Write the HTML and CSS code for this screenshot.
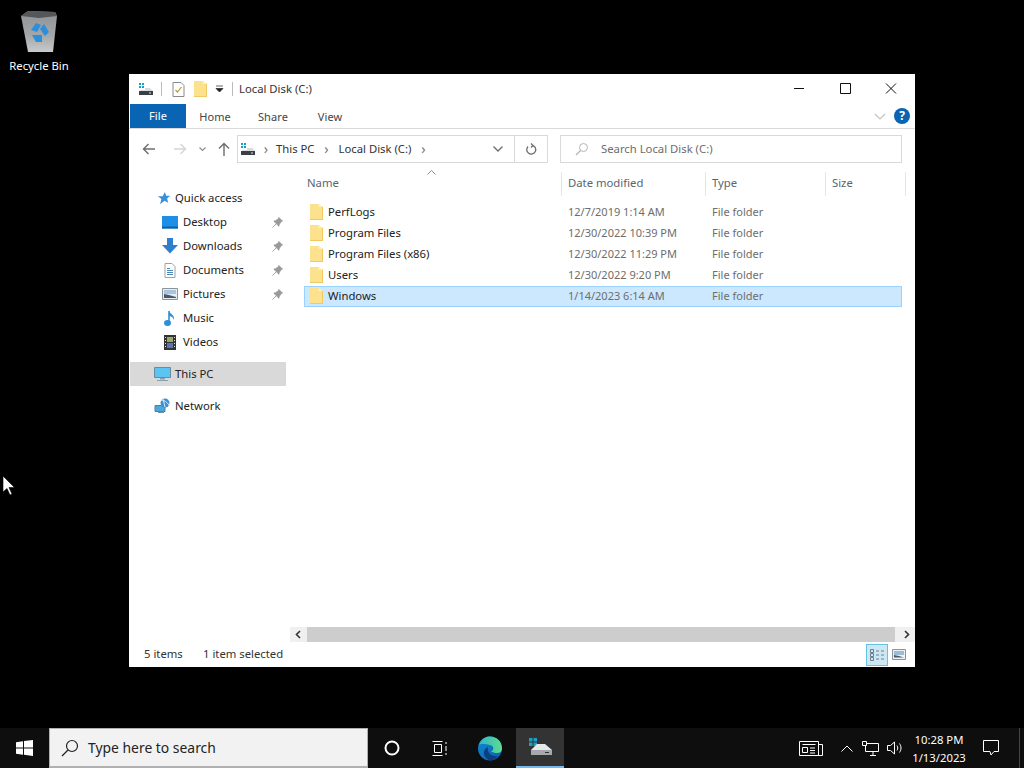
FILE: index.html
```html
<!DOCTYPE html>
<html lang="en">
<head>
    <meta charset="UTF-8">
    <title>Local Disk (C:)</title>
    <link rel="stylesheet" href="styles.css">
</head>
<body>
    <svg class="sprites" width="0" height="0">
        <defs>
            <linearGradient id="edgeFill" x1="0" y1="0" x2="1" y2="1">
                <stop offset="0" stop-color="#0f8ad0"/>
                <stop offset="1" stop-color="#0c5fae"/>
            </linearGradient>
            <linearGradient id="edgeTop" x1="0" y1="0" x2="1" y2="0">
                <stop offset="0" stop-color="#2fb6c8"/>
                <stop offset="1" stop-color="#5fdc8c"/>
            </linearGradient>
            <linearGradient id="binFill" x1="0" y1="0" x2="0" y2="1">
                <stop offset="0" stop-color="#8f9295"/>
                <stop offset=".6" stop-color="#a5a7a9"/>
                <stop offset="1" stop-color="#c8cacb"/>
            </linearGradient>
        </defs>
        <symbol id="folder" viewBox="0 0 13 16">
            <path d="M0 0h8.500L13 3v13H0z" fill="#fde28e"/>
            <path d="M12 2.500l1 .5v13H0v-1h12z" fill="#eec964"/>
            <path d="M8.500 0L13 3H8.500z" fill="#fff0b8"/>
        </symbol>
        <symbol id="drive" viewBox="0 0 16 14">
            <path d="M1 1h2v2H1zM4 1h2v2H4zM1 4h2v2H1zM4 4h2v2H4z" fill="#1aa0c8"/>
            <path d="M7 6h5l3 3H2l1-1h4z" fill="#d8dde2"/>
            <path d="M1 9h14v4H1z" fill="#3a3f45"/>
            <path d="M11 10.500h2v1h-2z" fill="#d7e7f2"/>
        </symbol>
        <symbol id="pin" viewBox="0 0 12 12">
            <path d="M7.500.5l4 4-1.500.5L8 8l-.5 2L2 4.500 4 4l3-2zM4.500 7.500L.5 11.500" fill="#999" stroke="#999"/>
        </symbol>
    </svg>

    <div class="desktop">
        <div class="recycle-bin">
            <svg width="38" height="44" viewBox="0 0 38 44">
                <path d="M1 7l7-5 27 1 2 4-4 36H8z" fill="url(#binFill)"/>
                <path d="M1 7l7-5 27 1 2 4-18 2z" fill="#55585b"/>
                <path d="M11 21l5-7 5 2-4 7zM24 15l5 8-4 4-5-7zM12 26h10v7h-6z" fill="#2c8fdc"/>
            </svg>
            <span>Recycle Bin</span>
        </div>

        <div class="window">
            <div class="titlebar">
                <svg class="qat-drive" width="16" height="14"><use href="#drive"/></svg>
                <span class="qat-sep"></span>
                <svg width="13" height="15" viewBox="0 0 13 15">
                    <path d="M1 .5h8l3 3v11H1z" fill="#fff" stroke="#8a8a8a"/>
                    <path d="M3.500 8l2 2 4-5" fill="none" stroke="#b59a3a" stroke-width="1.200"/>
                </svg>
                <svg class="qat-folder" width="13" height="16"><use href="#folder"/></svg>
                <svg class="qat-arrow" width="9" height="8" viewBox="0 0 9 8">
                    <path d="M1 1h7M1 3.500h7L4.500 7z" fill="#222" stroke="#222" stroke-width=".7"/>
                </svg>
                <span class="qat-sep"></span>
                <span class="title-text">Local Disk (C:)</span>
                <div class="win-buttons">
                    <svg width="46" height="30" viewBox="0 0 46 30"><path d="M18 14.500h10" stroke="#111"/></svg>
                    <svg width="46" height="30" viewBox="0 0 46 30"><path d="M18.500 9.500h10v10h-10z" fill="none" stroke="#111"/></svg>
                    <svg width="46" height="30" viewBox="0 0 46 30"><path d="M18 9.500l10 10M28 9.500l-10 10" stroke="#111"/></svg>
                </div>
            </div>

            <div class="tabs">
                <div class="tab tab-file">File</div>
                <div class="tab">Home</div>
                <div class="tab">Share</div>
                <div class="tab">View</div>
                <div class="ribbon-right">
                    <svg width="12" height="7" viewBox="0 0 12 7"><path d="M1 1l5 5 5-5" fill="none" stroke="#c4c4c4" stroke-width="1.200"/></svg>
                    <span class="help">?</span>
                </div>
            </div>

            <div class="toolbar">
                <div class="nav-arrows">
                    <svg width="14" height="12" viewBox="0 0 14 12"><path d="M13 6H2M6.500 1L1.500 6l5 5" fill="none" stroke="#6d6d6d" stroke-width="1.400"/></svg>
                    <svg width="14" height="12" viewBox="0 0 14 12"><path d="M1 6h11M7.500 1l5 5-5 5" fill="none" stroke="#d5d5d5" stroke-width="1.400"/></svg>
                    <svg width="7" height="5" viewBox="0 0 7 5"><path d="M.5.500l3 3 3-3" fill="none" stroke="#8a8a8a" stroke-width="1.100"/></svg>
                    <svg width="12" height="14" viewBox="0 0 12 14"><path d="M6 14V2M1 6.500l5-5 5 5" fill="none" stroke="#6d6d6d" stroke-width="1.400"/></svg>
                </div>
                <div class="address">
                    <svg class="addr-drive" width="16" height="14"><use href="#drive"/></svg>
                    <span class="crumb-sep">›</span>
                    <span class="crumb">This PC</span>
                    <span class="crumb-sep">›</span>
                    <span class="crumb">Local Disk (C:)</span>
                    <span class="crumb-sep">›</span>
                    <svg class="addr-down" width="10" height="6" viewBox="0 0 10 6"><path d="M.5.500L5 5 9.500.500" fill="none" stroke="#6d6d6d" stroke-width="1.300"/></svg>
                </div>
                <div class="refresh">
                    <svg width="12" height="13" viewBox="0 0 12 13"><path d="M7.500 2.300A4.500 4.500 0 1 1 3 3.500M6 .5l2 2-2 2" fill="none" stroke="#6d6d6d" stroke-width="1.300"/></svg>
                </div>
                <div class="search">
                    <svg width="14" height="14" viewBox="0 0 14 14"><circle cx="8.500" cy="5.500" r="4" fill="none" stroke="#b5b5b5"/><path d="M5.500 8.500L1 13" stroke="#b5b5b5" stroke-width="1.200"/></svg>
                    <span>Search Local Disk (C:)</span>
                </div>
            </div>

            <div class="body">
                <nav class="sidebar">
                    <div class="nav-row nav-top">
                        <svg width="14" height="14" viewBox="0 0 16 16"><path d="M9 1l1.500 4.500H15l-3.500 3 1.300 5L8.500 11 3.500 15l1.500-6L1 6h5.500z" fill="#3a8fd6"/></svg>
                        <span>Quick access</span>
                    </div>
                    <div class="nav-row nav-child">
                        <svg width="16" height="13" viewBox="0 0 16 13"><path d="M0 0h16v12.500H0z" fill="#1e8fe6"/><path d="M0 10.500h16v2H0z" fill="#0f5fa8"/></svg>
                        <span>Desktop</span>
                        <svg class="pin" width="11" height="11"><use href="#pin"/></svg>
                    </div>
                    <div class="nav-row nav-child">
                        <svg width="16" height="16" viewBox="0 0 16 16"><path d="M5 0h6v7h5l-8 8.500L0 7h5z" fill="#2f7fd0"/></svg>
                        <span>Downloads</span>
                        <svg class="pin" width="11" height="11"><use href="#pin"/></svg>
                    </div>
                    <div class="nav-row nav-child">
                        <svg width="16" height="15" viewBox="0 0 16 15"><path d="M3 .5h7l3 3v11H3z" fill="#fff" stroke="#9aa3ad"/><path d="M5 5.500h3M5 7.500h6M5 9.500h6M5 11.500h6" stroke="#4a87b8"/></svg>
                        <span>Documents</span>
                        <svg class="pin" width="11" height="11"><use href="#pin"/></svg>
                    </div>
                    <div class="nav-row nav-child">
                        <svg width="16" height="12" viewBox="0 0 16 12"><path d="M.5.500h15v11H.5z" fill="#e6eef5" stroke="#8b939b"/><path d="M2 2h12v4H2z" fill="#a8c4de"/><path d="M2 9V6l5 1 7 2v1H2z" fill="#4a5a6a"/></svg>
                        <span>Pictures</span>
                        <svg class="pin" width="11" height="11"><use href="#pin"/></svg>
                    </div>
                    <div class="nav-row nav-child">
                        <svg width="16" height="17" viewBox="0 0 16 17"><path d="M7 1v11" stroke="#2e8fd8" stroke-width="1.600"/><path d="M7 1c1 3 6 4 5 9-1-3-3-4-5-4z" fill="#2e8fd8"/><ellipse cx="5.500" cy="13" rx="3.500" ry="3" fill="#2e8fd8"/></svg>
                        <span>Music</span>
                    </div>
                    <div class="nav-row nav-child">
                        <svg width="16" height="15" viewBox="0 0 16 15"><path d="M2 0h12v15H2z" fill="#333"/><path d="M5 2h6v5H5z" fill="#9aa86a"/><path d="M5 8h6v5H5z" fill="#5a74b0"/><path d="M3 2h1v1H3zM3 5h1v1H3zM3 8h1v1H3zM3 11h1v1H3zM12 2h1v1h-1zM12 5h1v1h-1zM12 8h1v1h-1zM12 11h1v1h-1z" fill="#ddd"/></svg>
                        <span>Videos</span>
                    </div>
                    <div class="nav-row nav-this-pc">
                        <svg width="17" height="16" viewBox="0 0 17 16"><path d="M.5 1.500h16v10H.5z" fill="#5cc4f2" stroke="#6a8aa0"/><path d="M6 12h5v1.500H6z" fill="#8aa0b0"/><path d="M3 14.500h11" stroke="#8aa0b0"/></svg>
                        <span>This PC</span>
                    </div>
                    <div class="nav-row nav-network">
                        <svg width="17" height="16" viewBox="0 0 17 16"><path d="M1 7.500h10v6H1z" fill="#4aa8e0" stroke="#5a7f9c"/><path d="M4 14.500h6" stroke="#7a8f9f"/><circle cx="11" cy="5" r="4.500" fill="#3d8fd0"/><path d="M7 2c3 0 6 2 8 5M9 1l2 8" stroke="#d9ecf7" fill="none"/></svg>
                        <span>Network</span>
                    </div>
                </nav>

                <main class="content">
                    <div class="sort-arrow">
                        <svg width="9" height="5" viewBox="0 0 9 5"><path d="M.5 4.500l4-4 4 4" fill="none" stroke="#8a8a8a"/></svg>
                    </div>
                    <div class="list-header">
                        <div class="col col-name">Name</div>
                        <div class="col col-date">Date modified</div>
                        <div class="col col-type">Type</div>
                        <div class="col col-size">Size</div>
                    </div>
                    <div class="rows">
                        <div class="row">
                            <div class="cell-name"><svg width="13" height="16"><use href="#folder"/></svg>PerfLogs</div>
                            <div class="cell-meta">12/7/2019 1:14 AM</div>
                            <div class="cell-meta">File folder</div>
                        </div>
                        <div class="row">
                            <div class="cell-name"><svg width="13" height="16"><use href="#folder"/></svg>Program Files</div>
                            <div class="cell-meta">12/30/2022 10:39 PM</div>
                            <div class="cell-meta">File folder</div>
                        </div>
                        <div class="row">
                            <div class="cell-name"><svg width="13" height="16"><use href="#folder"/></svg>Program Files (x86)</div>
                            <div class="cell-meta">12/30/2022 11:29 PM</div>
                            <div class="cell-meta">File folder</div>
                        </div>
                        <div class="row">
                            <div class="cell-name"><svg width="13" height="16"><use href="#folder"/></svg>Users</div>
                            <div class="cell-meta">12/30/2022 9:20 PM</div>
                            <div class="cell-meta">File folder</div>
                        </div>
                        <div class="row row-selected">
                            <div class="cell-name"><svg width="13" height="16"><use href="#folder"/></svg>Windows</div>
                            <div class="cell-meta">1/14/2023 6:14 AM</div>
                            <div class="cell-meta">File folder</div>
                        </div>
                    </div>
                    <div class="hscroll">
                        <svg width="17" height="15" viewBox="0 0 17 15"><path d="M10 4L6.500 7.500 10 11" fill="none" stroke="#333" stroke-width="1.600"/></svg>
                        <div class="hscroll-thumb"></div>
                        <svg width="17" height="15" viewBox="0 0 17 15"><path d="M7 4l3.500 3.500L7 11" fill="none" stroke="#333" stroke-width="1.600"/></svg>
                    </div>
                </main>
            </div>

            <div class="statusbar">
                <span class="status-count">5 items</span>
                <span>1 item selected</span>
                <div class="view-buttons">
                    <div class="view-btn view-btn-on">
                        <svg width="16" height="14" viewBox="0 0 16 14"><path d="M1.500 1.500h3v3h-3zM1.500 5.500h3v3h-3zM1.500 9.500h3v3h-3z" fill="none" stroke="#6d7f8f"/><path d="M7 3h3M12 3h3M7 7h3M12 7h3M7 11h3M12 11h3" stroke="#6d7f8f"/></svg>
                    </div>
                    <div class="view-btn">
                        <svg width="14" height="11" viewBox="0 0 14 11"><path d="M.5.500h13v10H.5z" fill="#eef2f5" stroke="#8b939b"/><path d="M2 2h10v4H2z" fill="#9dbbd6"/><path d="M2 8.500V6l5 1 5 1.500z" fill="#4a5a6a"/></svg>
                    </div>
                </div>
            </div>
        </div>

        <svg class="cursor" width="12" height="20" viewBox="0 0 12 20">
            <path d="M0 0v16l4-3.500L7 19l2-1-3-6.500h5.500z" fill="#fff" stroke="#000" stroke-width=".6"/>
        </svg>
    </div>

    <footer class="taskbar">
        <div class="start">
            <svg width="17" height="16" viewBox="0 0 17 16"><path d="M0 2.300l7-1v6.200H0zM8 1.100L17 0v7.500H8zM0 8.500h7v6.200l-7-1zM8 8.500h9V16l-9-1.200z" fill="#fff"/></svg>
        </div>
        <div class="task-search">
            <svg width="18" height="18" viewBox="0 0 18 18"><circle cx="11" cy="7" r="5.500" fill="none" stroke="#222" stroke-width="1.200"/><path d="M7 11l-6 6" stroke="#222" stroke-width="1.300"/></svg>
            <span>Type here to search</span>
        </div>
        <div class="task-btn">
            <svg width="16" height="16" viewBox="0 0 16 16"><circle cx="8" cy="8" r="6.500" fill="none" stroke="#fff" stroke-width="2"/></svg>
        </div>
        <div class="task-btn">
            <svg width="16" height="15" viewBox="0 0 16 15"><path d="M.5.500h10M.5 14.500h10M2.500 3.500h7v8h-7zM14 1v2M14 5v5M14 12v2" fill="none" stroke="#fff"/></svg>
        </div>
        <div class="task-btn task-btn-edge">
            <svg width="24" height="25" viewBox="0 0 24 25">
                <circle cx="12" cy="12.500" r="12" fill="url(#edgeFill)"/>
                <path d="M1 9C3 2 9 .5 12 .5c7 0 12 5 12 12 0 3-2 4.500-5 4.500-2 0-5-.5-6-2 3 0 3.500-5-1-6C7 8 3 7.500 1 9z" fill="url(#edgeTop)"/>
                <path d="M10 12c-1 5 4 9 10 8-1 1-2 2-3 3-5 3-10 0-11-5-.5-3 1-6 4-7z" fill="#0b3f80"/>
            </svg>
        </div>
        <div class="task-btn task-btn-active">
            <svg width="23" height="20" viewBox="0 0 23 20">
                <path d="M0 1h3.500v3.500H0zM4.500 1H8v3.500H4.500zM0 5.500h3.500V9H0zM4.500 5.500H8V9H4.500z" fill="#1aa0c8"/>
                <path d="M8 7h8l7 6H2z" fill="#e6e9ec"/>
                <path d="M2 13h21v5H2z" fill="#a4a9ae"/>
                <path d="M16 15h4v1h-4z" fill="#333"/>
            </svg>
        </div>
        <div class="tray">
            <svg width="24" height="15" viewBox="0 0 24 15"><path d="M.5.500h19v14H.5zM19.500 3.500h4v11h-4zM3.500 3.500h13M3.500 6.500h5v5h-5zM11 7h5M11 9.500h5M11 12h5" fill="none" stroke="#fff"/></svg>
            <svg class="tray-chevron" width="12" height="7" viewBox="0 0 12 7"><path d="M.5 6.500L6 1l5.500 5.500" fill="none" stroke="#fff"/></svg>
            <svg class="tray-net" width="17" height="15" viewBox="0 0 17 15"><path d="M3.500 2.500h13v8H3.500zM8 14.500h6M11 10.500v4" fill="none" stroke="#fff"/><path d="M.5.500h4v4h-4z" fill="#111" stroke="#fff"/></svg>
            <svg class="tray-sound" width="16" height="14" viewBox="0 0 16 14"><path d="M.5 4.500h3l4-3.500v12l-4-3.500h-3zM10 4.500c1 1.500 1 3.500 0 5M12.500 2.500c2 3 2 6 0 9" fill="none" stroke="#fff"/></svg>
            <div class="clock">
                <div>10:28 PM</div>
                <div>1/13/2023</div>
            </div>
            <svg class="notify" width="16" height="16" viewBox="0 0 16 16"><path d="M.5.500h15v11h-4.500L8 15l-1-3.500H.5z" fill="none" stroke="#fff"/></svg>
            <span class="show-desktop"></span>
        </div>
    </footer>
</body>
</html>
```

FILE: styles.css
```css
* {
    margin: 0;
    padding: 0;
    box-sizing: border-box;
}

body {
    width: 1024px;
    height: 768px;
    overflow: hidden;
    background-color: #000;
    font-family: "Noto Sans", "Open Sans", sans-serif;
    font-size: 11.3px;
    color: #1f1f1f;
    display: flex;
    flex-direction: column;
}

svg {
    display: block;
    flex-shrink: 0;
}

.sprites {
    position: absolute;
}

.desktop {
    position: relative;
    flex: 1;
}

.recycle-bin {
    position: absolute;
    left: 0;
    top: 9px;
    width: 78px;
    display: flex;
    flex-direction: column;
    align-items: center;
    gap: 5px;
    color: #fff;
}

.recycle-bin span {
    line-height: 15px;
}

.cursor {
    position: absolute;
    left: 3px;
    top: 476px;
}

/* explorer window */
.window {
    position: absolute;
    left: 129px;
    top: 74px;
    width: 786px;
    height: 593px;
    background-color: #fff;
    display: flex;
    flex-direction: column;
}

.titlebar {
    height: 30px;
    display: flex;
    align-items: center;
    padding-left: 9px;
}

.qat-sep {
    width: 1px;
    height: 14px;
    background-color: #bbb;
    margin: 0 10px 0 7px;
}

.qat-folder {
    margin-left: 9px;
}

.qat-arrow {
    margin-left: 8px;
}

.qat-arrow + .qat-sep {
    margin-left: 8px;
    margin-right: 6px;
}

.title-text {
    color: #333;
    padding-bottom: 1px;
}

.win-buttons {
    margin-left: auto;
    display: flex;
    margin-right: 1px;
}

.tabs {
    height: 25px;
    display: flex;
    padding-left: 1px;
    border-bottom: 1px solid #dadada;
}

.tab {
    width: 58px;
    line-height: 25px;
    text-align: center;
    color: #444;
    font-size: 11px;
    letter-spacing: .1px;
}

.tab-file {
    width: 56px;
    line-height: 24px;
    background-color: #0a64b4;
    color: #fff;
}

.tab:nth-child(4) {
    margin-left: -1px;
}

.ribbon-right {
    margin-left: auto;
    display: flex;
    align-items: center;
    gap: 8px;
    padding-right: 5px;
}

.help {
    width: 16px;
    height: 16px;
    border-radius: 50%;
    background-color: #0a64b4;
    color: #fff;
    font-weight: 700;
    font-size: 12px;
    line-height: 16px;
    text-align: center;
}

.toolbar {
    height: 28px;
    margin-top: 6px;
    display: flex;
    align-items: center;
}

.nav-arrows {
    width: 108px;
    display: flex;
    align-items: center;
    padding-left: 13px;
}

.nav-arrows svg:nth-child(2) {
    margin-left: 17px;
}

.nav-arrows svg:nth-child(3) {
    margin-left: 12px;
}

.nav-arrows svg:nth-child(4) {
    margin-left: 12px;
}

.address {
    width: 278px;
    height: 28px;
    border: 1px solid #d9d9d9;
    display: flex;
    align-items: center;
    padding-left: 2px;
    color: #333;
}

.crumb {
    padding-bottom: 2px;
}

.crumb-sep {
    width: 24px;
    text-align: center;
    color: #777;
    font-size: 14px;
    line-height: 14px;
    padding-bottom: 1px;
}

.addr-down {
    margin-left: auto;
    margin-right: 11px;
}

.address .addr-drive + .crumb-sep {
    width: 20px;
}

.refresh {
    width: 33px;
    height: 28px;
    border: 1px solid #d9d9d9;
    border-left: none;
    display: flex;
    align-items: center;
    justify-content: center;
}

.search {
    width: 342px;
    height: 28px;
    margin-left: 12px;
    border: 1px solid #d9d9d9;
    display: flex;
    align-items: center;
    padding-left: 14px;
    gap: 12px;
    color: #6d6d6d;
}

.search span {
    padding-bottom: 2px;
}

.body {
    flex: 1;
    display: grid;
    grid-template-columns: 157px 1fr;
    min-height: 0;
}

.sidebar {
    padding-top: 23px;
    display: flex;
    flex-direction: column;
}

.nav-row {
    height: 24px;
    display: flex;
    align-items: center;
    color: #222;
}

.nav-row span {
    padding-bottom: 2px;
}

.nav-top {
    padding-left: 28px;
    gap: 4px;
}

.nav-this-pc span,
.nav-network span {
    margin-left: 4px;
}

.nav-child {
    padding-left: 32px;
    gap: 5px;
    margin-left: 1px;
}

.nav-child .pin {
    margin-left: auto;
    margin-right: 3px;
}

.nav-this-pc {
    margin: 8px 0 8px 1px;
    padding-left: 24px;
    background-color: #d9d9d9;
}

.nav-network {
    padding-left: 25px;
}

.content {
    position: relative;
    display: flex;
    flex-direction: column;
}

.sort-arrow {
    position: absolute;
    left: 141px;
    top: 7px;
}

.list-header {
    height: 24px;
    margin-top: 9px;
    margin-left: 18px;
    display: flex;
    color: #5a6570;
}

.col {
    border-right: 1px solid #e5e5e5;
    line-height: 22px;
    padding-left: 6px;
}

.col-name {
    width: 258px;
    padding-left: 3px;
}

.col-date {
    width: 144px;
}

.col-type {
    width: 120px;
}

.col-size {
    width: 80px;
}

.rows {
    flex: 1;
    margin: 6px 13px 0 18px;
}

.row {
    height: 21px;
    display: grid;
    grid-template-columns: 264px 144px 1fr;
    align-items: center;
}

.row-selected {
    background-color: #cce8ff;
    box-shadow: inset 0 0 0 1px #99d1ff;
}

.cell-name {
    display: flex;
    align-items: center;
    gap: 5px;
    padding-left: 6px;
    padding-bottom: 2px;
    color: #222;
}

.cell-meta {
    color: #6d6d6d;
    font-size: 11px;
    padding-bottom: 2px;
}

.hscroll {
    height: 15px;
    margin-left: 4px;
    display: flex;
    background-color: #f0f0f0;
}

.hscroll-thumb {
    flex: 1;
    margin-right: 3px;
    background-color: #cdcdcd;
}

.statusbar {
    height: 25px;
    display: flex;
    align-items: center;
    padding-left: 15px;
    color: #333;
}

.statusbar > span {
    padding-bottom: 2px;
}

.status-count {
    width: 59px;
}

.view-buttons {
    margin-left: auto;
    display: flex;
    align-items: center;
    margin-right: 5px;
}

.view-btn {
    width: 22px;
    height: 22px;
    display: flex;
    align-items: center;
    justify-content: center;
}

.view-btn-on {
    background-color: #cde8f5;
    border: 1px solid #66c2e0;
}

/* taskbar */
.taskbar {
    height: 40px;
    background-color: #0e0e0e;
    display: flex;
    align-items: center;
    color: #fff;
}

.start {
    width: 49px;
    display: flex;
    justify-content: center;
}

.task-search {
    width: 319px;
    height: 40px;
    border: 1px solid #b0b0b0;
    border-bottom-width: 2px;
    background-color: #f2f2f2;
    color: #222;
    font-size: 13.9px;
    display: flex;
    align-items: center;
    padding-left: 11px;
    gap: 9px;
}

.task-btn {
    width: 48px;
    height: 40px;
    display: flex;
    align-items: center;
    justify-content: center;
}

.task-btn-edge {
    width: 52px;
}

.task-btn-active {
    background-color: #333;
    border-bottom: 2px solid #76b9ed;
}

.tray {
    margin-left: auto;
    display: flex;
    align-items: center;
}

.tray-chevron {
    margin-left: 18px;
}

.tray-net {
    margin-left: 9px;
}

.tray-sound {
    margin-left: 8px;
}

.clock {
    margin-left: 6px;
    padding-top: 1px;
    width: 60px;
    text-align: center;
    line-height: 18px;
}

.notify {
    margin-left: 14px;
}

.show-desktop {
    width: 5px;
    height: 40px;
    margin-left: 20px;
    border-left: 1px solid #444;
}
```
